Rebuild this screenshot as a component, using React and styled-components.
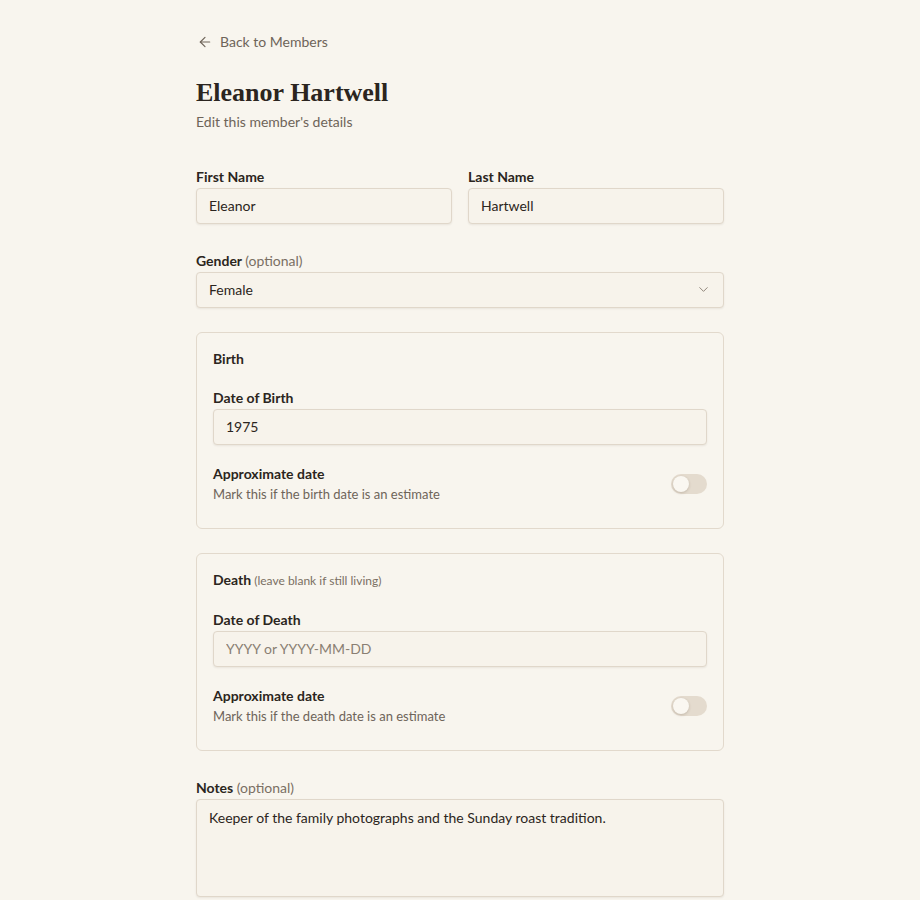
import React from 'react';
import styled, { createGlobalStyle } from 'styled-components';
import { ArrowLeft, ChevronDown } from 'lucide-react';

const GlobalStyle = createGlobalStyle`
  html, body {
    margin: 0;
    padding: 0;
    background: #f8f5ee;
  }
  body {
    font-family: Lato, "Open Sans", sans-serif;
    color: #2b2520;
  }
  * { box-sizing: border-box; }
`;

const Page = styled.div`
  width: 528px;
  margin: 0 auto;
  padding: 32px 0 40px;
`;

const BackLink = styled.a`
  display: flex;
  width: fit-content;
  height: 20px;
  align-items: center;
  gap: 7px;
  font-size: 14px;
  line-height: 20px;
  color: #6e6459;
  text-decoration: none;
  cursor: pointer;
  svg { margin-left: 1px; }
`;

const Header = styled.header`
  margin: 25px 0 32px;
`;

const Title = styled.h1`
  margin: 0 0 3px;
  font-family: "Liberation Serif", "DejaVu Serif", serif;
  font-weight: 700;
  font-size: 26px;
  line-height: 32px;
  color: #2b2520;
`;

const Subtitle = styled.p`
  margin: 0;
  font-size: 14px;
  line-height: 20px;
  color: #6e6459;
`;

const Form = styled.form`
  display: flex;
  flex-direction: column;
  gap: 24px;
`;

const Row = styled.div`
  display: grid;
  grid-template-columns: 1fr 1fr;
  gap: 16px;
`;

const Field = styled.div`
  display: flex;
  flex-direction: column;
`;

const Label = styled.label`
  display: block;
  margin: 3px 0 1px;
  font-size: 14px;
  line-height: 20px;
  font-weight: 700;
  color: #2b2520;
`;

const Muted = styled.span`
  font-weight: 400;
  color: #7a6f63;
  font-size: ${p => (p.$small ? '12px' : 'inherit')};
`;

const fieldBase = `
  width: 100%;
  border: 1px solid #e0d7ca;
  border-radius: 4px;
  background: #f7f3eb;
  box-shadow: 0 1px 2px rgba(60, 40, 20, 0.08);
  font-family: Lato, "Open Sans", sans-serif;
  font-size: 14px;
  color: #2b2520;
  outline: none;
`;

const Input = styled.input`
  ${fieldBase}
  height: 36px;
  padding: 0 12px 1px;
  &::placeholder { color: #8a7f73; }
`;

const SelectBox = styled.div`
  ${fieldBase}
  height: 36px;
  padding: 0 12px 1px;
  display: flex;
  align-items: center;
  justify-content: space-between;
  svg { color: #8a7f73; }
`;

const TextArea = styled.textarea`
  ${fieldBase}
  height: 98px;
  padding: 8px 12px;
  line-height: 20px;
  resize: none;
`;

const Card = styled.section`
  border: 1px solid #e2d9cc;
  border-radius: 6px;
  padding: 16px 16px 25px;
  display: flex;
  flex-direction: column;
  gap: 16px;
`;

const CardTitle = styled.div`
  font-size: 14px;
  line-height: 20px;
  font-weight: 700;
`;

const ToggleRow = styled.div`
  margin-top: 3px;
  display: flex;
  align-items: center;
  justify-content: space-between;
`;

const ToggleText = styled.div`
  display: flex;
  flex-direction: column;
`;

const ToggleLabel = styled.span`
  font-size: 14px;
  line-height: 20px;
  font-weight: 700;
`;

const ToggleHint = styled.span`
  margin-top: 1px;
  font-size: 13px;
  line-height: 18px;
  color: #6e6459;
`;

const Switch = styled.button`
  position: relative;
  width: 36px;
  height: 20px;
  border: none;
  border-radius: 10px;
  background: #e4dbce;
  padding: 0;
  cursor: pointer;
  &::after {
    content: '';
    position: absolute;
    top: 2px;
    left: ${p => (p.$on ? '18px' : '2px')};
    width: 16px;
    height: 16px;
    border-radius: 50%;
    background: #faf7f1;
    box-shadow: 0 1px 3px rgba(60, 40, 20, 0.2);
  }
`;

const DateCard = ({ title, note, label, value, placeholder, hint }) => (
  <Card>
    <CardTitle>
      {title}
      {note && <Muted $small> ({note})</Muted>}
    </CardTitle>
    <Field>
      <Label>{label}</Label>
      <Input defaultValue={value} placeholder={placeholder} />
    </Field>
    <ToggleRow>
      <ToggleText>
        <ToggleLabel>Approximate date</ToggleLabel>
        <ToggleHint>{hint}</ToggleHint>
      </ToggleText>
      <Switch type="button" />
    </ToggleRow>
  </Card>
);

export default function App() {
  return (
    <>
      <GlobalStyle />
      <Page>
        <BackLink>
          <ArrowLeft size={16} strokeWidth={1.75} />
          Back to Members
        </BackLink>
        <Header>
          <Title>Eleanor Hartwell</Title>
          <Subtitle>Edit this member's details</Subtitle>
        </Header>
        <Form onSubmit={e => e.preventDefault()}>
          <Row>
            <Field>
              <Label>First Name</Label>
              <Input defaultValue="Eleanor" />
            </Field>
            <Field>
              <Label>Last Name</Label>
              <Input defaultValue="Hartwell" />
            </Field>
          </Row>
          <Field>
            <Label>Gender <Muted>(optional)</Muted></Label>
            <SelectBox>
              Female
              <ChevronDown size={15} strokeWidth={1.5} />
            </SelectBox>
          </Field>
          <DateCard
            title="Birth"
            label="Date of Birth"
            value="1975"
            hint="Mark this if the birth date is an estimate"
          />
          <DateCard
            title="Death"
            note="leave blank if still living"
            label="Date of Death"
            placeholder="YYYY or YYYY-MM-DD"
            hint="Mark this if the death date is an estimate"
          />
          <Field>
            <Label>Notes <Muted>(optional)</Muted></Label>
            <TextArea defaultValue="Keeper of the family photographs and the Sunday roast tradition." />
          </Field>
        </Form>
      </Page>
    </>
  );
}
